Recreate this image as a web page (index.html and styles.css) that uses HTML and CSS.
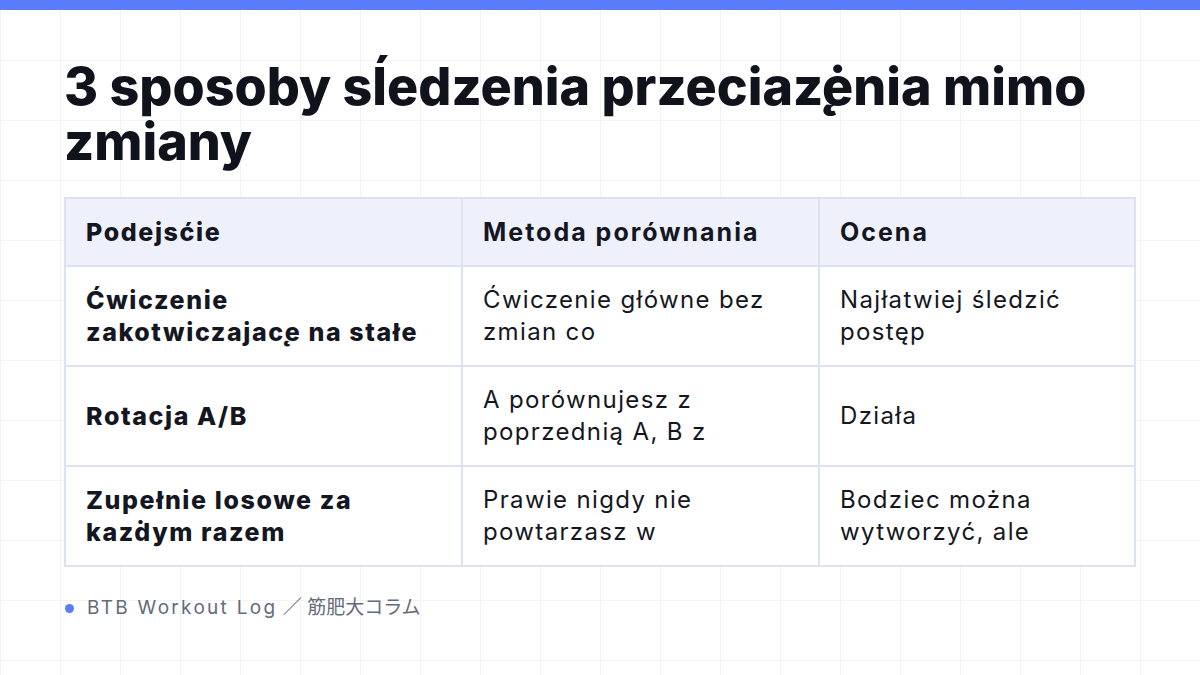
FILE: index.html
```html
<!DOCTYPE html>
<html lang="pl">
<head>
<meta charset="utf-8">
<title>3 sposoby</title>
<link rel="stylesheet" href="styles.css">
</head>
<body>
<div class="topbar"></div>
<main class="slide">
  <h1 class="title">3 sposoby sĺedzenia przeciaz̨ėnia mimo zmiany</h1>
  <table class="grid-table">
    <colgroup>
      <col class="c1"><col class="c2"><col class="c3">
    </colgroup>
    <thead>
      <tr><th class="strong">Podejsćie</th><th>Metoda porównania</th><th>Ocena</th></tr>
    </thead>
    <tbody>
      <tr><td class="strong">Ćwiczenie zakotwiczajac̨e na stałe</td><td>Ćwiczenie główne bez zmian co</td><td>Najłatwiej śledzić postęp</td></tr>
      <tr><td class="strong">Rotacja A/B</td><td>A porównujesz z poprzednią A, B z</td><td>Działa</td></tr>
      <tr><td class="strong">Zupełnie losowe za kazḋym razem</td><td>Prawie nigdy nie powtarzasz w</td><td>Bodziec można wytworzyć, ale</td></tr>
    </tbody>
  </table>
  <footer class="footer"><span class="dot"></span><span class="footer-text"><span class="brand">BTB Workout Log</span> ／ 筋肥大コラム</span></footer>
</main>
</body>
</html>
```
FILE: styles.css
```css
html, body {
  margin: 0;
  padding: 0;
}
body {
  width: 1200px;
  height: 675px;
  overflow: hidden;
  background-color: #ffffff;
  background-image:
    linear-gradient(to right, #f1f3f8 1px, transparent 1px),
    linear-gradient(to bottom, #f1f3f8 1px, transparent 1px);
  background-size: 60px 60px;
  background-position: 0 0;
  font-family: "Inter", "Noto Sans CJK JP", sans-serif;
  color: #141722;
}
.topbar {
  height: 10px;
  background: #5b7cfa;
}
.slide {
  padding: 49px 64px 0 64px;
}
.title {
  margin: 0;
  font-family: "Inter", "Noto Sans CJK JP", sans-serif;
  font-weight: 800;
  font-size: 52px;
  line-height: 55px;
  letter-spacing: 0;
  color: #10121c;
}
.grid-table {
  margin-top: 28px;
  width: 1072px;
  border-collapse: collapse;
  table-layout: fixed;
  background: #ffffff;
}
.c1 { width: 397px; }
.c2 { width: 357px; }
.grid-table th,
.grid-table td {
  border: 2px solid #dde2ef;
  padding: 17px 20px;
  font-size: 24px;
  line-height: 32px;
  text-align: left;
  vertical-align: middle;
  letter-spacing: 1.35px;
}
.grid-table th {
  background: #eef1fb;
  font-size: 25px;
  font-weight: 700;
  letter-spacing: 2px;
}
.grid-table td {
  font-weight: 400;
}
.grid-table .strong {
  font-size: 25px;
  font-weight: 800;
  letter-spacing: 1.6px;
}
.footer {
  margin-top: 28px;
  display: flex;
  align-items: center;
  gap: 13px;
  padding-left: 1px;
}
.dot {
  width: 9px;
  height: 9px;
  border-radius: 50%;
  background: #5b7cfa;
}
.footer-text {
  font-size: 19px;
  line-height: 26px;
  color: #646b7b;
}
.brand {
  letter-spacing: 2.3px;
}
```
